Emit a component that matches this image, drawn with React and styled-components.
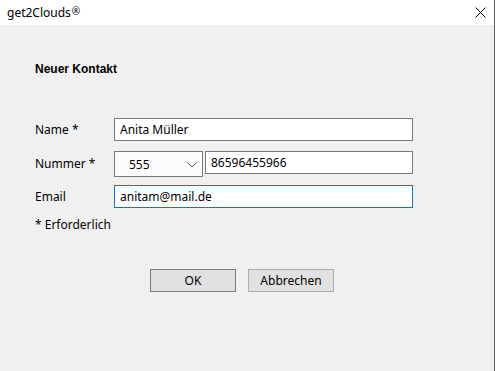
import styled, { createGlobalStyle } from "styled-components";

const GlobalStyle = createGlobalStyle`
  html, body {
    margin: 0;
    padding: 0;
    background: #f0f0f0;
  }
  body {
    font-family: "Noto Sans", "Open Sans", sans-serif;
    font-size: 12px;
    color: #000;
  }
`;

const Window = styled.div`
  width: 495px;
  height: 371px;
  display: flex;
  flex-direction: column;
  box-sizing: border-box;
  border-right: 1px solid #5a5a5a;
  background: #f0f0f0;
  overflow: hidden;
`;

const TitleBar = styled.div`
  height: 25px;
  background: #fff;
  display: flex;
  align-items: center;
  justify-content: space-between;
  padding-left: 7px;
  padding-right: 8px;
  font-size: 12px;
`;

const Reg = styled.span`
  font-size: 10px;
  margin-left: 1px;
  position: relative;
  top: -2px;
`;

const Close = styled.svg`
  width: 11px;
  height: 11px;
`;

const Body = styled.div`
  padding: 37px 0 0 35px;
  display: flex;
  flex-direction: column;
`;

const Heading = styled.h1`
  margin: 0;
  font-family: "Liberation Sans", Arial, sans-serif;
  font-weight: bold;
  font-size: 12px;
  line-height: 15px;
`;

const Form = styled.div`
  margin-top: 41px;
  display: flex;
  flex-direction: column;
`;

const Row = styled.div`
  display: flex;
  align-items: center;
  margin-top: ${(p) => p.$gap || 0}px;
`;

const Label = styled.label`
  width: 79px;
  flex: none;
  line-height: 16px;
`;

const Input = styled.input`
  box-sizing: border-box;
  width: ${(p) => p.$width || 299}px;
  height: 23px;
  margin: 0;
  padding: 0 5px;
  border: 1px solid ${(p) => (p.$focused ? "#0078d7" : "#7a7a7a")};
  background: #fff;
  font: inherit;
  color: #000;
  outline: none;
`;

const NumberGroup = styled.div`
  display: flex;
  align-items: flex-start;
  gap: 2px;
  height: 26px;
`;

const Select = styled.div`
  box-sizing: border-box;
  width: 89px;
  height: 26px;
  border: 1px solid #7a7a7a;
  background: #fbfbfb;
  display: flex;
  align-items: center;
  position: relative;
  flex: none;
  padding-left: 14px;
`;

const Chevron = styled.svg`
  position: absolute;
  right: 5px;
  top: 10px;
  width: 10px;
  height: 6px;
`;

const Note = styled.div`
  margin-top: 9px;
  line-height: 16px;
`;

const Buttons = styled.div`
  margin-top: 36px;
  padding-left: 115px;
  display: flex;
  gap: 12px;
`;

const Button = styled.button`
  box-sizing: border-box;
  width: 86px;
  height: 23px;
  margin: 0;
  padding: 0;
  border: 1px solid ${(p) => (p.$primary ? "#7a7a7a" : "#adadad")};
  background: #e1e1e1;
  font: inherit;
  color: #000;
`;

export default function App() {
  return (
    <>
      <GlobalStyle />
      <Window>
        <TitleBar>
          <span>
            get2Clouds<Reg>®</Reg>
          </span>
          <Close viewBox="0 0 11 11">
            <path d="M0.5 0.5L10.5 10.5M10.5 0.5L0.5 10.5" stroke="#000" strokeWidth="1" fill="none" />
          </Close>
        </TitleBar>
        <Body>
          <Heading>Neuer Kontakt</Heading>
          <Form>
            <Row>
              <Label>Name *</Label>
              <Input defaultValue="Anita Müller" />
            </Row>
            <Row $gap={10}>
              <Label>Nummer *</Label>
              <NumberGroup>
                <Select>
                  <span>555</span>
                  <Chevron viewBox="0 0 10 6">
                    <path d="M0.5 0.5L5 5L9.5 0.5" stroke="#555" strokeWidth="1" fill="none" />
                  </Chevron>
                </Select>
                <Input $width={208} defaultValue="86596455966" />
              </NumberGroup>
            </Row>
            <Row $gap={8}>
              <Label>Email</Label>
              <Input $focused defaultValue="anitam@mail.de" />
            </Row>
          </Form>
          <Note>* Erforderlich</Note>
          <Buttons>
            <Button $primary>OK</Button>
            <Button>Abbrechen</Button>
          </Buttons>
        </Body>
      </Window>
    </>
  );
}
